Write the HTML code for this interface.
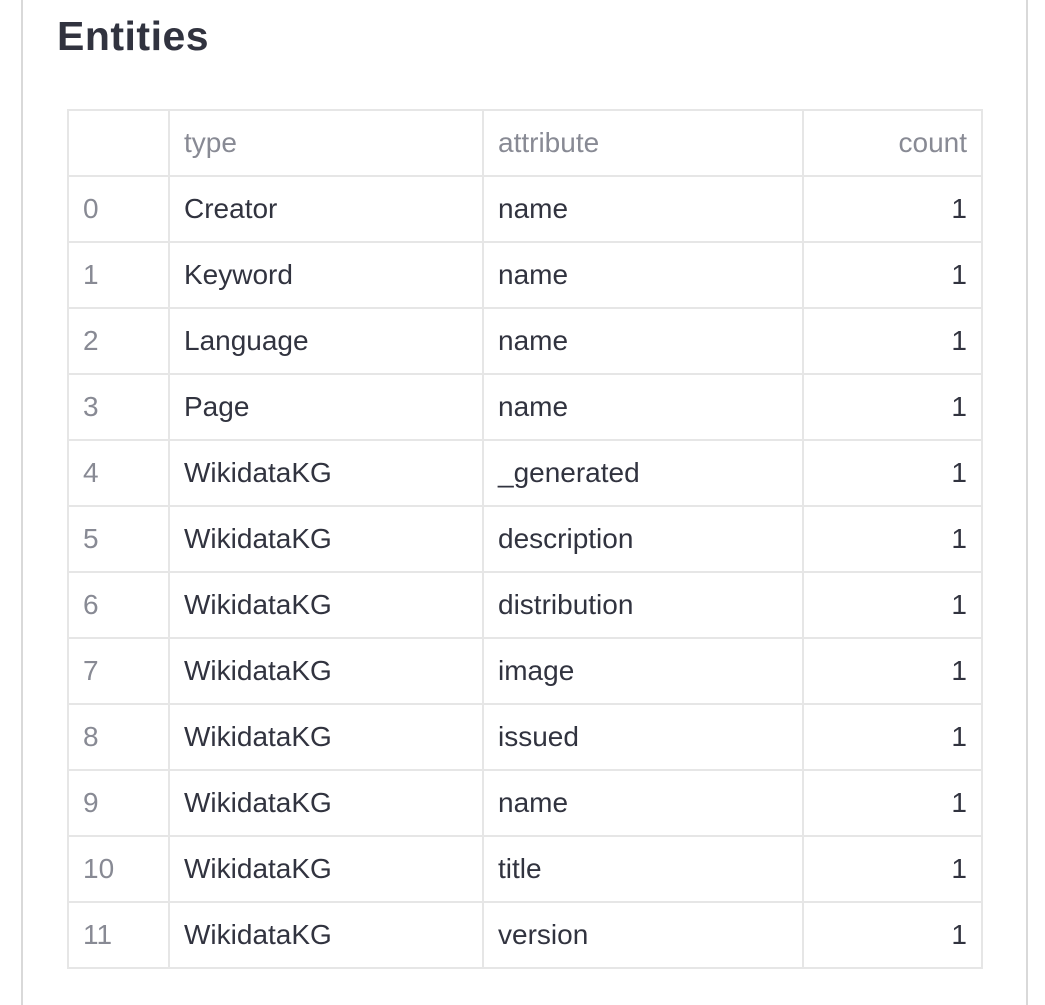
<!DOCTYPE html>
<html><head><meta charset="utf-8"><style>
html,body{margin:0;padding:0;background:#fff;width:1045px;height:1005px;overflow:hidden;font-family:"Liberation Sans",sans-serif;}
.lb{position:absolute;left:21px;top:0;width:2px;height:1005px;background:#d9d9d9}
.rb{position:absolute;left:1026px;top:0;width:2px;height:1005px;background:#d9d9d9}
h1{position:absolute;left:57px;top:13px;margin:0;font-size:41px;font-weight:bold;color:#31333f;letter-spacing:0.5px}
table{position:absolute;left:67px;top:109px;border-collapse:collapse;font-size:28px;color:#31333f}
td{border:2px solid #e6e6e6;height:62px;padding:0 14px;box-sizing:border-box}
tr td:nth-child(1){width:101px;color:#888a94}
tr td:nth-child(2){width:314px}
tr td:nth-child(3){width:320px}
tr td:nth-child(4){width:179px;text-align:right}
tr.h td{color:#888a94}
</style></head><body>
<div class="lb"></div><div class="rb"></div>
<h1>Entities</h1>
<table>
<tr class="h" style="height:66px"><td></td><td>type</td><td>attribute</td><td>count</td></tr>
<tr style="height:66px"><td>0</td><td>Creator</td><td>name</td><td>1</td></tr>
<tr style="height:66px"><td>1</td><td>Keyword</td><td>name</td><td>1</td></tr>
<tr style="height:66px"><td>2</td><td>Language</td><td>name</td><td>1</td></tr>
<tr style="height:66px"><td>3</td><td>Page</td><td>name</td><td>1</td></tr>
<tr style="height:66px"><td>4</td><td>WikidataKG</td><td>_generated</td><td>1</td></tr>
<tr style="height:66px"><td>5</td><td>WikidataKG</td><td>description</td><td>1</td></tr>
<tr style="height:66px"><td>6</td><td>WikidataKG</td><td>distribution</td><td>1</td></tr>
<tr style="height:66px"><td>7</td><td>WikidataKG</td><td>image</td><td>1</td></tr>
<tr style="height:66px"><td>8</td><td>WikidataKG</td><td>issued</td><td>1</td></tr>
<tr style="height:66px"><td>9</td><td>WikidataKG</td><td>name</td><td>1</td></tr>
<tr style="height:66px"><td>10</td><td>WikidataKG</td><td>title</td><td>1</td></tr>
<tr style="height:66px"><td>11</td><td>WikidataKG</td><td>version</td><td>1</td></tr>
</table>
</body></html>
